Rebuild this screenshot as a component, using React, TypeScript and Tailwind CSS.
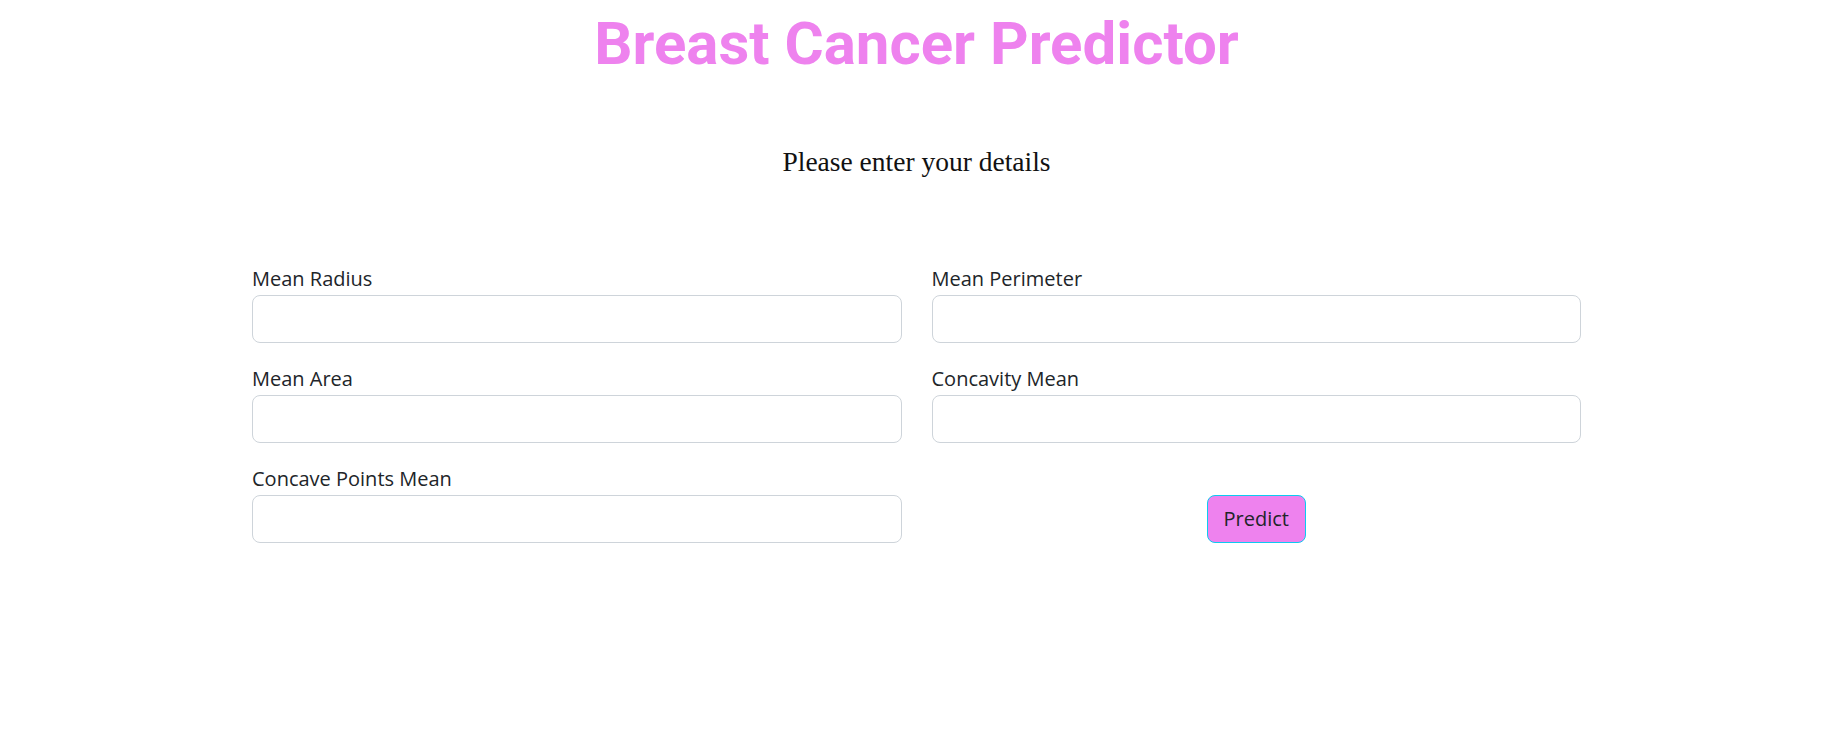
import { useState } from 'react';

const fields = [
    { id: 'mean_radius', label: 'Mean Radius' },
    { id: 'mean_perimeter', label: 'Mean Perimeter' },
    { id: 'mean_area', label: 'Mean Area' },
    { id: 'concavity_mean', label: 'Concavity Mean' },
    { id: 'concave_points_mean', label: 'Concave Points Mean' },
];

export default function App() {
    const [values, setValues] = useState<Record<string, string>>({});

    return (
        <div className="w-[1833px] min-h-[735px] bg-white">
            {/* Header */}
            <h1 className="pt-2 text-center text-[60px] leading-[72px] font-bold text-[#ee82ee] font-['Roboto',sans-serif]">
                Breast Cancer Predictor
            </h1>
            <p className="mt-[62px] text-center text-[27.5px] leading-[40px] text-[#111] font-['Liberation_Serif',serif]">
                Please enter your details
            </p>

            {/* Form */}
            <form
                className="mt-[82px] mx-auto w-[1329px] grid grid-cols-2 gap-x-[30px] gap-y-[21px] font-['Open_Sans',sans-serif]"
                onSubmit={(e) => e.preventDefault()}
            >
                {fields.map((f) => (
                    <div key={f.id} className="flex flex-col">
                        <label htmlFor={f.id} className="text-[20px] leading-[30px] text-[#212529]">
                            {f.label}
                        </label>
                        <input
                            id={f.id}
                            type="text"
                            value={values[f.id] ?? ''}
                            onChange={(e) => setValues({ ...values, [f.id]: e.target.value })}
                            className="mt-px h-12 px-4 rounded-lg border border-[#ced4da] bg-white text-[20px] text-[#212529] focus:outline-none"
                        />
                    </div>
                ))}
                <div className="flex items-end justify-center">
                    <button
                        type="submit"
                        className="h-12 px-4 rounded-lg border border-[#0dcaf0] bg-[#ee82ee] text-[20px] leading-[30px] text-[#212529]"
                    >
                        Predict
                    </button>
                </div>
            </form>
        </div>
    );
}
